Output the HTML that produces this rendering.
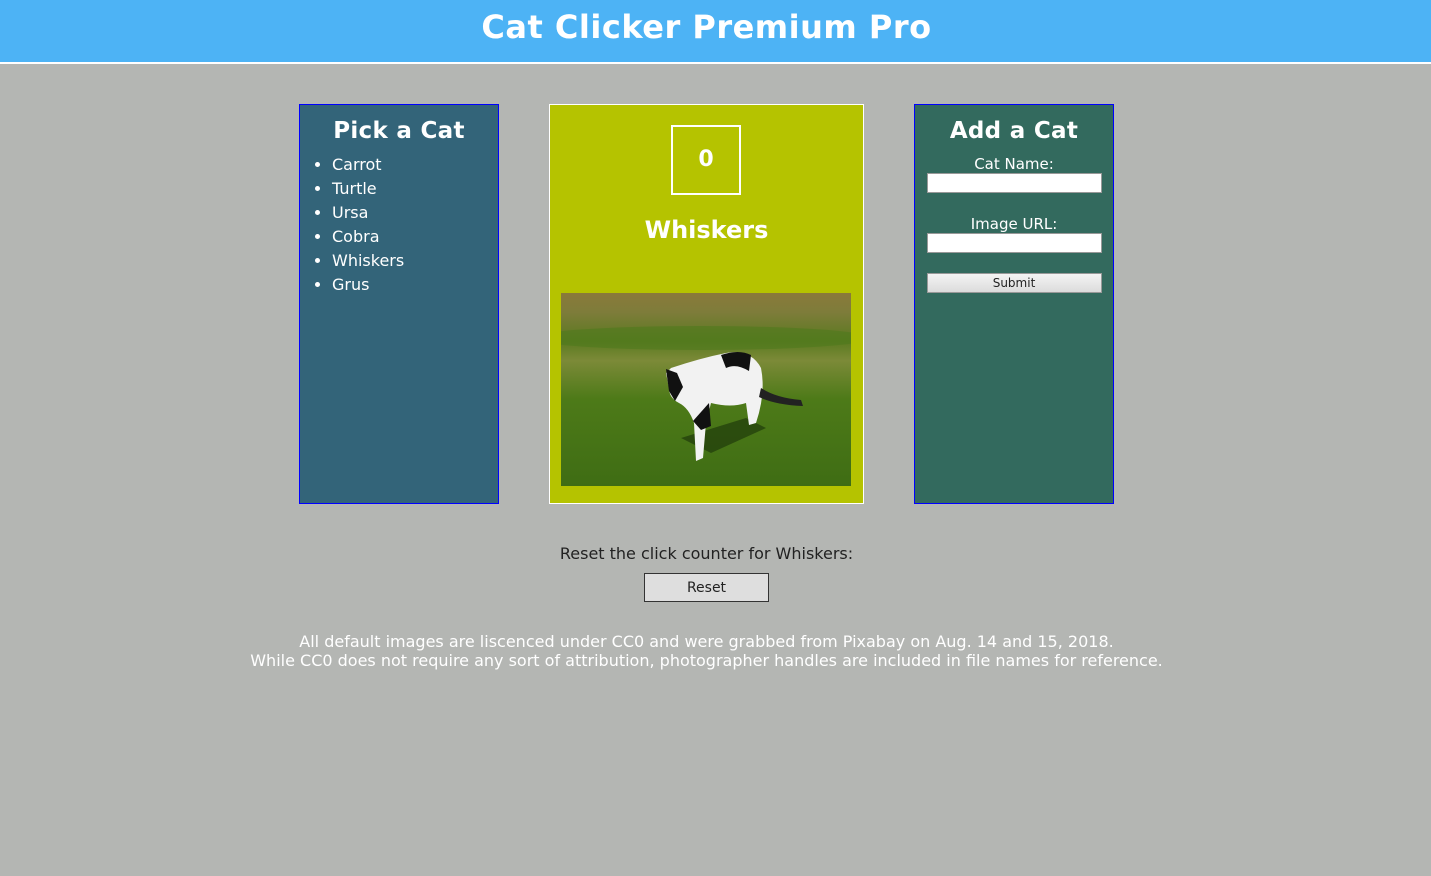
<!DOCTYPE html>
<html><head><meta charset="utf-8"><style>
*{margin:0;padding:0;box-sizing:border-box}
body{width:1431px;height:876px;background:#b4b6b3;font-family:"DejaVu Sans","Liberation Sans",sans-serif;color:#fff;position:relative;overflow:hidden}
.hdr{position:absolute;left:0;top:0;width:1431px;height:64px;background:#4db3f5;border-bottom:2px solid #fff}
.hdr div{width:1413px;text-align:center;font-weight:bold;font-size:32px;line-height:54px;letter-spacing:0.5px}
.box{position:absolute;top:104px;height:400px}
.left{left:299px;width:200px;background:#336479;border:1px solid #0000ff}
.mid{left:549px;width:315px;background:#b5c300;border:1px solid #fff}
.right{left:914px;width:200px;background:#336a5e;border:1px solid #0000ff}
h2{font-size:23px;text-align:center;font-weight:bold;margin-top:13px;letter-spacing:0.3px;line-height:27px}
ul{margin:8px 0 0 32px;font-size:16px;line-height:24px}
.cnt{position:absolute;left:121px;top:20px;width:70px;height:70px;border:2px solid #fff;text-align:center;line-height:66px;font-weight:bold;font-size:22px}
.name{position:absolute;left:0;width:100%;top:111px;text-align:center;font-weight:bold;font-size:24px}
.img{position:absolute;left:11px;top:188px;width:290px;height:193px;background:linear-gradient(180deg,#8a7a3a 0%,#7e7c3a 10%,#5a7a20 25%,#7c8a38 35%,#4d7a18 55%,#3f6d14 100%);overflow:hidden}
label{display:block;text-align:center;font-size:15px;line-height:18px}
.in{margin:0 auto;width:175px;height:20px;background:#fff;border:1px solid #999}
.btn{margin:0 auto;width:175px;height:20px;background:linear-gradient(#f4f4f4,#dcdcdc);border:1px solid #999;color:#222;font-size:12px;text-align:center;line-height:18px}
.reset{position:absolute;left:0;width:1413px;top:544px;text-align:center;color:#222;font-size:16px}
.rbtn{position:absolute;left:644px;top:573px;width:125px;height:29px;background:#dedede;border:1px solid #333;color:#222;text-align:center;font-size:14px;line-height:28px}
.foot{position:absolute;left:0;width:1413px;top:632px;text-align:center;font-size:16px;line-height:19px;color:#fff}
</style></head><body>
<div class="hdr"><div>Cat Clicker Premium Pro</div></div>
<div class="box left"><h2>Pick a Cat</h2>
<ul><li>Carrot</li><li>Turtle</li><li>Ursa</li><li>Cobra</li><li>Whiskers</li><li>Grus</li></ul></div>
<div class="box mid"><div class="cnt">0</div><div class="name">Whiskers</div>
<div class="img"><svg width="290" height="193" viewBox="0 0 290 193">
<ellipse cx="140" cy="45" rx="170" ry="12" fill="#4e7a1c" opacity=".6"/>
<path d="M120 145 L185 125 L205 135 L150 160 Z" fill="#1f3a0c" opacity=".7"/>
<path d="M105 80 L110 75 Q140 65 165 60 Q190 56 200 75 Q205 100 195 130 L188 132 L185 110 Q170 115 150 110 L145 130 L142 165 L135 168 L133 130 Q128 115 118 110 Q108 105 108 95 Z" fill="#f2f2f2"/>
<path d="M160 62 Q178 56 190 62 L188 78 Q175 70 165 75 Z" fill="#111"/>
<path d="M105 76 L116 80 L122 94 L114 108 L108 98 Z" fill="#111"/>
<path d="M132 128 L148 110 L150 133 L140 137 Z" fill="#111"/>
<path d="M200 95 Q215 105 240 107 L242 113 Q215 112 198 104 Z" fill="#222"/>
</svg></div></div>
<div class="box right"><h2>Add a Cat</h2>
<label style="margin-top:10px">Cat Name:</label><div class="in"></div>
<label style="margin-top:22px">Image URL:</label><div class="in"></div>
<div class="btn" style="margin-top:20px">Submit</div></div>
<div class="reset">Reset the click counter for Whiskers:</div>
<div class="rbtn">Reset</div>
<div class="foot">All default images are liscenced under CC0 and were grabbed from Pixabay on Aug. 14 and 15, 2018.<br>While CC0 does not require any sort of attribution, photographer handles are included in file names for reference.</div>
</body></html>
